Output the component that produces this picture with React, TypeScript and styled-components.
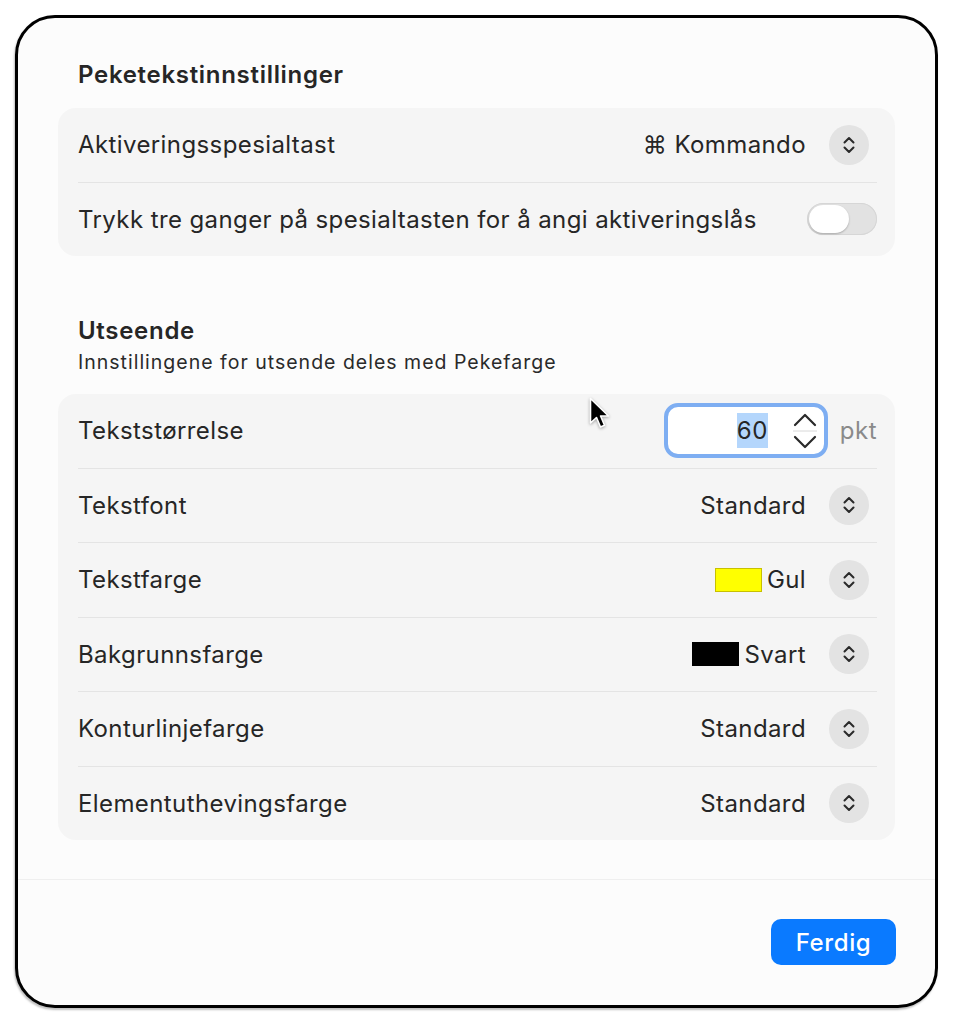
import React from 'react';
import styled, { createGlobalStyle } from 'styled-components';

const GlobalStyle = createGlobalStyle`
  html, body {
    margin: 0;
    padding: 0;
    background: #ffffff;
  }
  body {
    font-family: Inter, "Noto Sans", "Liberation Sans", sans-serif;
    color: #262626;
  }
`;

const rows = [
  { label: 'Tekstfont', value: 'Standard' },
  { label: 'Tekstfarge', value: 'Gul', swatch: '#ffff00', swatchBorder: '#c8c000' },
  { label: 'Bakgrunnsfarge', value: 'Svart', swatch: '#000000', swatchBorder: '#000000' },
  { label: 'Konturlinjefarge', value: 'Standard' },
  { label: 'Elementuthevingsfarge', value: 'Standard' },
];

const ChevronIcon = () => (
  <svg width="14" height="20" viewBox="0 0 14 20" fill="none">
    <path d="M2.5 7.5 L7 3 L11.5 7.5" stroke="#2a2a2a" strokeWidth="2" strokeLinecap="round" strokeLinejoin="round" />
    <path d="M2.5 12.5 L7 17 L11.5 12.5" stroke="#2a2a2a" strokeWidth="2" strokeLinecap="round" strokeLinejoin="round" />
  </svg>
);

const StepperIcon = () => (
  <svg width="28" height="46" viewBox="0 0 28 46" fill="none">
    <path d="M4 17 L14 7 L24 17" stroke="#2a2a2a" strokeWidth="2.2" strokeLinecap="round" strokeLinejoin="round" />
    <line x1="2" y1="23" x2="26" y2="23" stroke="#d8d8d8" strokeWidth="1" />
    <path d="M4 29 L14 39 L24 29" stroke="#2a2a2a" strokeWidth="2.2" strokeLinecap="round" strokeLinejoin="round" />
  </svg>
);

const CursorIcon = () => (
  <svg width="24" height="36" viewBox="0 0 24 36" style={{ filter: 'drop-shadow(0 1px 1.5px rgba(0,0,0,0.35))' }}>
    <path
      d="M1.5 1.5 L1.5 26 L7.5 20.5 L11.5 30 L15.5 28.3 L11.6 19 L19.5 19 Z"
      fill="#000"
      stroke="#fff"
      strokeWidth="1.6"
      strokeLinejoin="round"
    />
  </svg>
);

export default function App() {
  return (
    <>
      <GlobalStyle />
      <Page>
        <Window>
          <Content>
            <SectionTitle>Peketekstinnstillinger</SectionTitle>
            <Group>
              <Row>
                <Label>Aktiveringsspesialtast</Label>
                <Control>
                  <Value>⌘ Kommando</Value>
                  <PopupButton>
                    <ChevronIcon />
                  </PopupButton>
                </Control>
              </Row>
              <Divider />
              <Row>
                <Label>Trykk tre ganger på spesialtasten for å angi aktiveringslås</Label>
                <Toggle>
                  <Knob />
                </Toggle>
              </Row>
            </Group>

            <SectionHeader>
              <SectionTitle>Utseende</SectionTitle>
              <Subtitle>Innstillingene for utsende deles med Pekefarge</Subtitle>
            </SectionHeader>

            <Group>
              <Row>
                <Label>Tekststørrelse</Label>
                <Control>
                  <NumberField>
                    <NumberText>
                      <Selected>60</Selected>
                    </NumberText>
                    <StepperIcon />
                  </NumberField>
                  <Unit>pkt</Unit>
                </Control>
              </Row>
              {rows.map((r) => (
                <React.Fragment key={r.label}>
                  <Divider />
                  <Row>
                    <Label>{r.label}</Label>
                    <Control>
                      {r.swatch && <Swatch $color={r.swatch} $border={r.swatchBorder!} />}
                      <Value $tight={!!r.swatch}>{r.value}</Value>
                      <PopupButton>
                        <ChevronIcon />
                      </PopupButton>
                    </Control>
                  </Row>
                </React.Fragment>
              ))}
            </Group>
          </Content>

          <Footer>
            <DoneButton>Ferdig</DoneButton>
          </Footer>

          <Cursor>
            <CursorIcon />
          </Cursor>
        </Window>
      </Page>
    </>
  );
}

const Page = styled.div`
  width: 954px;
  height: 1024px;
  padding: 15px 0 0 15px;
  box-sizing: border-box;
`;

const Window = styled.div`
  position: relative;
  width: 923px;
  height: 993px;
  box-sizing: border-box;
  border: 3px solid #000;
  border-radius: 40px;
  background: #fcfcfc;
  box-shadow: -1px 2px 2px rgba(0, 0, 0, 0.25);
  display: flex;
  flex-direction: column;
  overflow: hidden;
`;

const Content = styled.div`
  flex: 1;
  padding: 43px 40px 0 40px;
  display: flex;
  flex-direction: column;
`;

const SectionTitle = styled.div`
  font-size: 24px;
  font-weight: 600;
  line-height: 28px;
  padding-left: 20px;
  margin-bottom: 19px;
  color: #262626;
  letter-spacing: 0.7px;
`;

const SectionHeader = styled.div`
  margin-top: 61px;
  margin-bottom: 18px;

  & > ${SectionTitle} {
    margin-bottom: 3px;
  }
`;

const Subtitle = styled.div`
  font-size: 19.5px;
  line-height: 28px;
  padding-left: 20px;
  color: #2a2a2a;
  letter-spacing: 1px;
`;

const Group = styled.div`
  background: #f5f5f5;
  border-radius: 18px;
  padding: 0 18px 0 20px;
  display: flex;
  flex-direction: column;
`;

const Row = styled.div`
  height: 73.5px;
  display: flex;
  align-items: center;
  justify-content: space-between;
`;

const Divider = styled.div`
  height: 1px;
  background: #e4e4e4;
`;

const Label = styled.div`
  font-size: 24px;
  color: #262626;
  letter-spacing: 0.4px;
`;

const Control = styled.div`
  display: flex;
  align-items: center;
`;

const Value = styled.div<{ $tight?: boolean }>`
  font-size: 24px;
  color: #262626;
  margin-left: ${(p) => (p.$tight ? '5px' : '0')};
  margin-right: 23px;
  letter-spacing: 0.4px;
`;

const PopupButton = styled.div`
  width: 40px;
  height: 40px;
  border-radius: 50%;
  background: #e3e3e3;
  display: flex;
  align-items: center;
  justify-content: center;
  margin-right: 8px;
`;

const Swatch = styled.div<{ $color: string; $border: string }>`
  width: 45px;
  height: 22px;
  background: ${(p) => p.$color};
  border: 1px solid ${(p) => p.$border};
`;

const Toggle = styled.div`
  width: 70px;
  height: 32px;
  border-radius: 16px;
  background: #e2e2e2;
  box-shadow: inset 0 0 0 1px #d6d6d6;
  display: flex;
  align-items: center;
  padding: 0 2px;
  box-sizing: border-box;
`;

const Knob = styled.div`
  width: 40px;
  height: 28px;
  border-radius: 14px;
  background: #ffffff;
  box-shadow: 0 1px 2px rgba(0, 0, 0, 0.25);
`;

const NumberField = styled.div`
  width: 164px;
  height: 55px;
  box-sizing: border-box;
  border: 4px solid #7eaef2;
  border-radius: 14px;
  background: #ffffff;
  display: flex;
  align-items: center;
  justify-content: flex-end;
  padding-right: 5px;
`;

const NumberText = styled.div`
  font-size: 24px;
  color: #262626;
  margin-right: 23px;
  letter-spacing: 0.5px;
`;

const Selected = styled.span`
  background: #b4d6fc;
  padding: 3px 0;
`;

const Unit = styled.div`
  font-size: 24px;
  color: #8a8a8a;
  margin-left: 12px;
  letter-spacing: 0.5px;
`;

const Footer = styled.div`
  height: 126px;
  border-top: 1px solid #efefef;
  display: flex;
  justify-content: flex-end;
  align-items: flex-start;
  padding: 39px 39px 0 0;
  box-sizing: border-box;
`;

const DoneButton = styled.button`
  width: 125px;
  height: 46px;
  border: none;
  border-radius: 10px;
  background: #0a7aff;
  color: #ffffff;
  font-family: Inter, "Noto Sans", "Liberation Sans", sans-serif;
  font-size: 24px;
  font-weight: 500;
  letter-spacing: 0.6px;
  cursor: pointer;
`;

const Cursor = styled.div`
  position: absolute;
  left: 571px;
  top: 379px;
  pointer-events: none;
`;
